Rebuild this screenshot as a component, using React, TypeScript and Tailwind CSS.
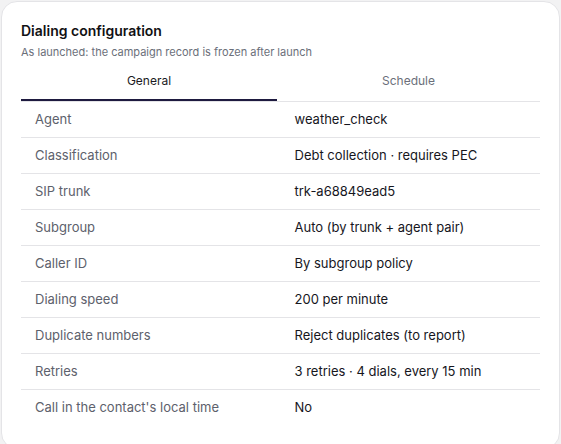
import React, { useState } from 'react';

const rows: { label: string; value: string }[] = [
  { label: 'Agent', value: 'weather_check' },
  { label: 'Classification', value: 'Debt collection · requires PEC' },
  { label: 'SIP trunk', value: 'trk-a68849ead5' },
  { label: 'Subgroup', value: 'Auto (by trunk + agent pair)' },
  { label: 'Caller ID', value: 'By subgroup policy' },
  { label: 'Dialing speed', value: '200 per minute' },
  { label: 'Duplicate numbers', value: 'Reject duplicates (to report)' },
  { label: 'Retries', value: '3 retries · 4 dials, every 15 min' },
  { label: "Call in the contact's local time", value: 'No' },
];

const tabs = ['General', 'Schedule'];

export default function App() {
  const [active, setActive] = useState('General');

  return (
    <div className="min-h-screen bg-[#f2f2f3] p-px font-['Inter',sans-serif]">
      <div className="rounded-[16px] border border-[#e4e4e7] bg-white px-[19px] pt-[19px] pb-[22px]">
        <h2 className="text-[14px] font-semibold leading-5 text-[#111114]">Dialing configuration</h2>
        <p className="mt-[3px] text-[11px] leading-4 text-[#6b6f7a]">
          As launched: the campaign record is frozen after launch
        </p>

        <div className="mt-[6px] grid grid-cols-[256px_1fr] border-b border-[#e4e4e7]">
          {tabs.map((tab) => (
            <button
              key={tab}
              onClick={() => setActive(tab)}
              className={
                tab === active
                  ? 'h-[35px] border-b-2 border-[#1e1a3f] pb-[3px] text-[12px] text-[#1a1a22]'
                  : 'h-[35px] border-b-2 border-transparent pb-[3px] text-[12px] text-[#6b6f7a]'
              }
            >
              {tab}
            </button>
          ))}
        </div>

        <div>
          {rows.map((row, i) => (
            <div
              key={row.label}
              className={
                i < rows.length - 1
                  ? 'grid h-[36px] grid-cols-2 items-center border-b border-[#e4e4e7] text-[13px]'
                  : 'grid h-[36px] grid-cols-2 items-center text-[13px]'
              }
            >
              <span className="px-[14px] text-[#5d616c]">{row.label}</span>
              <span className="px-[14px] text-[#16161d]">{row.value}</span>
            </div>
          ))}
        </div>
      </div>
    </div>
  );
}
